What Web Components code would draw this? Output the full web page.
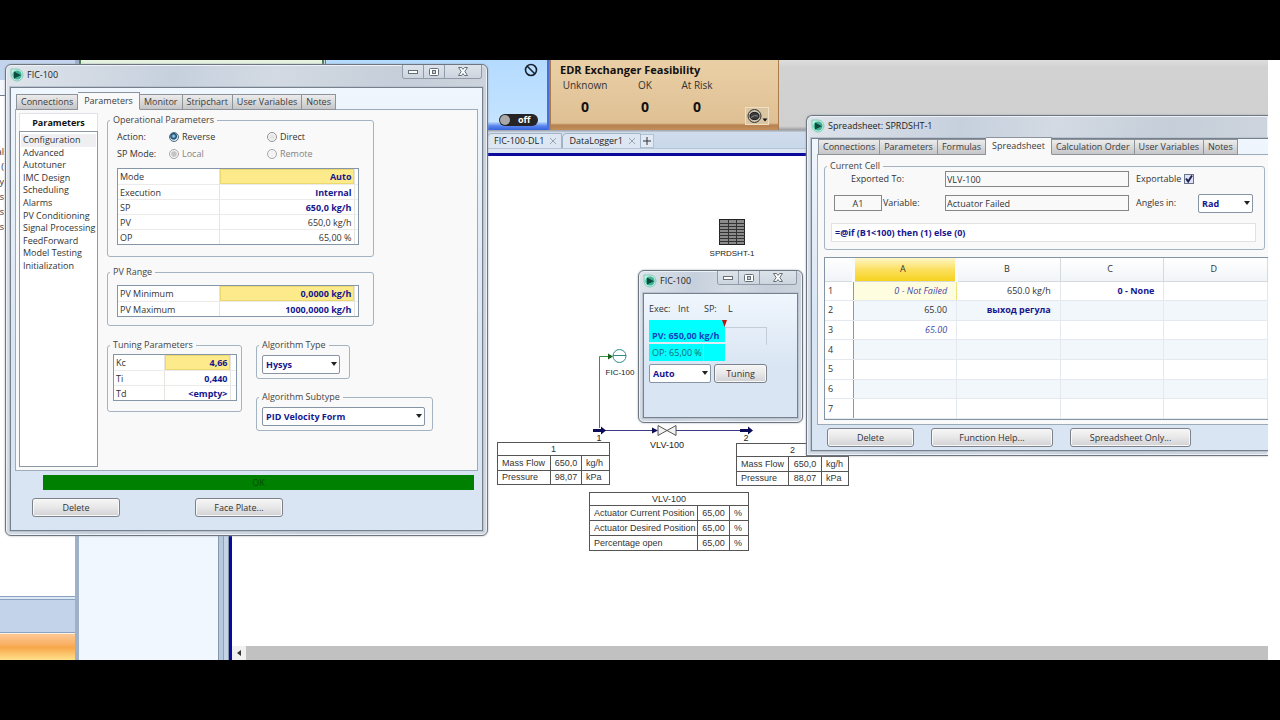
<!DOCTYPE html>
<html lang="en">
<head>
<meta charset="utf-8">
<title>Flowsheet workspace</title>
<style>
html, body { height: 100%; margin: 0; }
body { background: #000; font: 9px/12px "Open Sans", "Noto Sans", sans-serif; color: #333; }
</style>
</head>
<body>
<flow-workspace></flow-workspace>

<script>
const BASE = `*, *::before, *::after { box-sizing: border-box; } :host([hidden]) { display: none; }
button, input, select { font: inherit; color: inherit; margin: 0; }`;

function define(name, css, html, setup) {
  const tpl = document.createElement('template');
  customElements.define(name, class extends HTMLElement {
    constructor() {
      super();
      this.attachShadow({ mode: 'open' });
    }
    connectedCallback() {
      if (this.shadowRoot.childNodes.length) return;
      const markup = typeof html === 'function' ? html(this) : html;
      tpl.innerHTML = `<style>${BASE}${css}</style>${markup}`;
      this.shadowRoot.append(tpl.content.cloneNode(true));
      if (setup) setup(this);
    }
  });
}

/* ---------- small controls ---------- */

define('push-button', `
:host { display: block; height: 19px; }
button { display: block; width: 100%; height: 100%; padding: 0; line-height: 17px; color: #333;
  border: 1px solid #7d828a; border-radius: 3px;
  background: linear-gradient(#f6f6f6, #e9e9ea 45%, #d2d2d5); box-shadow: inset 0 0 0 1px #f8f8f8; }
`, `<button type="button"><slot></slot></button>`);

define('drop-down', `
:host { display: block; position: relative; height: 19px; }
select { appearance: none; display: block; width: 100%; height: 100%; padding: 1px 14px 0 3px;
  border: 1px solid #8694a3; border-radius: 2px; background: #fff; color: #16168e; font-weight: 700; line-height: 16px; }
svg { position: absolute; right: 3px; top: 7px; pointer-events: none; }
`, el => `<select aria-label="${el.getAttribute('label')}"><option>${el.getAttribute('value')}</option></select>
<svg width="6" height="4" viewBox="0 0 6 4"><path d="M0 0h6L3 4z" fill="#222"/></svg>`);

define('radio-option', `
:host { display: block; }
label { display: flex; align-items: center; gap: 3px; }
input { appearance: none; width: 10px; height: 10px; border: 1px solid #8e9296; border-radius: 50%;
  background: radial-gradient(circle, #e4e4e4 30%, #fff 80%); }
input:checked { border-color: #4e6a80; background: radial-gradient(circle at 45% 40%, #8cc9ea 0 10%, #1c4d70 40% 45%, #dceaf2 60%); }
:host([muted]) { color: #838383; }
:host([muted]) input { border-color: #a9a9a9; background: #f4f4f4; }
:host([muted]) input:checked { background: radial-gradient(circle, #c4c4c4 40%, #f4f4f4 60%); }
`, el => `<label><input type="radio" name="r" ${el.hasAttribute('checked') ? 'checked' : ''} ${el.hasAttribute('muted') ? 'disabled' : ''}><slot></slot></label>`);

define('group-box', `
:host { display: block; }
fieldset { margin: 0; min-width: 0; height: 100%; padding: 0; border: 1px solid #a4b3c1; border-radius: 3px; }
legend { margin-left: 2px; padding: 0 3px; height: 12px; line-height: 12px; color: #444; }
`, el => `<fieldset><legend>${el.getAttribute('label')}</legend><slot></slot></fieldset>`);

define('tab-strip', `
:host { display: block; }
div { display: flex; align-items: flex-end; height: 18px; padding-left: 1px; }
button { height: 16px; padding: 0 4px; border: 1px solid #8c939b; border-width: 1px 1px 1px 0; line-height: 14px; color: #3c3c3c;
  background: linear-gradient(#ececec, #d9d9da 50%, #c6c6c8); white-space: nowrap; }
button:first-child { border-left-width: 1px; }
button[aria-selected=true] { height: 18px; padding: 0 6px 1px; background: #f9f9f9; border-bottom-color: #f9f9f9; }
`, el => `<div role="tablist">${el.getAttribute('tabs').split('|').map(t =>
  `<button type="button" role="tab" aria-selected="${t === el.getAttribute('active')}">${t}</button>`).join('')}</div>`);

/* rows: "name;value;style" separated by "|" (style: b = bold value, y = current cell) */
define('prop-grid', `
:host { display: block; border: 1px solid #8496a8; background: #fff; }
table { width: 100%; border-collapse: collapse; table-layout: fixed; }
th, td { height: 15px; padding: 1px 2px 0; line-height: 13px; border-bottom: 1px solid #ecebe8; white-space: nowrap; }
tr:last-child > * { border-bottom: 0; }
th { width: var(--name, 101px); text-align: left; font-weight: 400; border-right: 1px solid #e6e4df; }
td { text-align: right; }
td + td { width: var(--pad, 4px); padding: 0; border-left: 1px solid #e6e4df; }
.b { font-weight: 700; color: #16168e; }
.y { background: #fdea8b; box-shadow: inset 0 0 0 1px #ecd870; }
`, el => `<table>${el.getAttribute('rows').split('|').map(r => {
  const [n, v, s = ''] = r.split(';');
  return `<tr><th scope="row">${n}</th><td class="${[...s].join(' ')}">${v.replace(/</g, '&lt;')}</td><td></td></tr>`;
}).join('')}</table>`);

/* ---------- window chrome ---------- */

define('win-frame', `
:host { display: block; position: absolute; border: 1px solid #6d7681; border-radius: 6px; padding: 0 4px 4px;
  background: linear-gradient(100deg, #dfe4eb, #c6d0dd 30%, #d3dae3 48%, #c5ced9 70%, #d2d8e0); box-shadow: inset 0 0 0 1px #eef1f5, 0 0 2px #9aa3ad; }
header { display: flex; height: 22px; }
h2 { flex: 1; display: flex; align-items: center; gap: 3px; margin: 0; padding-bottom: 2px; font: inherit; color: #222; }
.ctl { display: flex; height: 14px; margin-right: 1px; border: 1px solid #929ba7; border-top: 0; border-radius: 0 0 3px 3px; overflow: hidden; }
.ctl button { width: 21px; padding: 0; border: 0; border-right: 1px solid #929ba7; background: linear-gradient(#dde3ea, #ccd5df); display: grid; place-items: center; }
.ctl button:last-child { width: 36px; border-right: 0; }
main { border: 1px solid #76818d; box-shadow: 0 0 0 1px #b9c4d0; background: linear-gradient(#f0f6fd, #d9e5f3 60%); }
:host([bare]) .ctl { display: none; }
:host([bare]) { border-right: 0; border-radius: 6px 0 0 0; padding-right: 0; }
:host([bare]) main { border-right: 0; }
`, el => `<header><h2>
<svg width="14" height="14" viewBox="0 0 14 14"><path d="M1 1h6a6 6 0 1 1-6 6z" fill="#c9eee3" stroke="#7fcdb8"/><circle cx="7" cy="7" r="4.600" fill="#3fb296"/><path d="M4 3.600 11 7.300 4 10.600z" fill="#0d4a3f"/></svg>
<span>${el.getAttribute('title-text')}</span></h2>
<div class="ctl">
<button type="button" aria-label="Minimize"><svg width="10" height="4"><rect x=".5" y=".5" width="9" height="3" fill="#fff" stroke="#666e78"/></svg></button>
<button type="button" aria-label="Restore"><svg width="10" height="8"><rect x=".5" y=".5" width="9" height="7" rx="1" fill="#fff" stroke="#666e78"/><rect x="3.5" y="2.5" width="3" height="3" fill="#ccd" stroke="#666e78"/></svg></button>
<button type="button" aria-label="Close"><svg width="10" height="9" viewBox="0 0 10 9"><path d="M.5.5h3L5 2.400 6.500.5h3L6.800 4.500l2.700 4h-3L5 6.600 3.500 8.500h-3l2.700-4z" fill="#fff" stroke="#666e78"/></svg></button>
</div></header><main><slot></slot></main>`);

/* ---------- controller window ---------- */

define('controller-panel', `
:host { display: block; padding: 4px 4px 13px 4px; }
.page { display: flex; gap: 9px; height: 362px; margin-top: -1px; padding: 3px; border: 1px solid #9babba; background: #f9f9f9; }
nav { flex: none; width: 79px; display: flex; flex-direction: column; background: #fff; border: 1px solid #dfe3e8; }
h3 { margin: 0; height: 17px; font: inherit; font-weight: 700; line-height: 17px; text-align: center; color: #111; }
.list { flex: 1; border: 1px solid #8b98a5; margin: 0 -1px -1px; }
ul { display: grid; grid-auto-rows: 1fr; height: 138px; margin: 2px 1px 0; padding: 0; list-style: none; }
li { display: flex; align-items: center; padding-left: 2px; white-space: nowrap; }
li:first-child { background: #efeff1; }
.main { flex: 1; padding-top: 1px; }
.op { width: 267px; height: 143px; }
.modes { display: grid; grid-template-columns: 52px 98px 1fr; grid-auto-rows: 17px; align-items: center; padding: 2px 0 6px 9px; }
.op prop-grid, .pv prop-grid { margin-left: 9px; width: 242px; }
.pv { width: 267px; height: 60px; margin-top: 9px; padding-bottom: 0; }
.pv prop-grid { margin-top: 7px; }
.bottom { display: flex; gap: 14px; margin-top: 13px; align-items: flex-start; }
.tune { width: 135px; height: 73px; }
.tune prop-grid { width: 124px; margin: 3px 0 0 5px; --name: 50px; --pad: 6px; }
.algo { display: grid; gap: 12px; justify-items: start; }
.algo group-box { height: 40px; }
.type { width: 94px; } .type drop-down { width: 78px; }
.sub { width: 177px; } .sub drop-down { width: 163px; }
.algo drop-down { margin: 4px 0 0 5px; }
.status { height: 15px; margin: 4px 4px 0 28px; background: #008000; color: #064b06; text-align: center; line-height: 15px; }
.acts { display: flex; gap: 75px; margin: 8px 0 0 17px; }
.acts push-button { width: 88px; }
`, `
<tab-strip tabs="Connections|Parameters|Monitor|Stripchart|User Variables|Notes" active="Parameters"></tab-strip>
<div class="page">
  <nav><h3>Parameters</h3><div class="list"><ul>
    <li>Configuration</li><li>Advanced</li><li>Autotuner</li><li>IMC Design</li><li>Scheduling</li><li>Alarms</li>
    <li>PV Conditioning</li><li>Signal Processing</li><li>FeedForward</li><li>Model Testing</li><li>Initialization</li></ul></div></nav>
  <div class="main">
    <group-box class="op" label="Operational Parameters">
      <div class="modes">
        <span>Action:</span><radio-option checked>Reverse</radio-option><radio-option>Direct</radio-option>
        <span>SP Mode:</span><radio-option checked muted>Local</radio-option><radio-option muted>Remote</radio-option>
      </div>
      <prop-grid rows="Mode;Auto;by|Execution;Internal;b|SP;650,0 kg/h;b|PV;650,0 kg/h|OP;65,00 %"></prop-grid>
    </group-box>
    <group-box class="pv" label="PV Range">
      <prop-grid rows="PV Minimum;0,0000 kg/h;by|PV Maximum;1000,0000 kg/h;b"></prop-grid>
    </group-box>
    <div class="bottom">
      <group-box class="tune" label="Tuning Parameters"><prop-grid rows="Kc;4,66;by|Ti;0,440;b|Td;<empty>;b"></prop-grid></group-box>
      <div class="algo">
        <group-box class="type" label="Algorithm Type"><drop-down label="Algorithm Type" value="Hysys"></drop-down></group-box>
        <group-box class="sub" label="Algorithm Subtype"><drop-down label="Algorithm Subtype" value="PID Velocity Form"></drop-down></group-box>
      </div>
    </div>
  </div>
</div>
<div class="status" role="status">OK</div>
<div class="acts"><push-button>Delete</push-button><push-button>Face Plate...</push-button></div>
`);

/* ---------- face plate window ---------- */

define('face-plate', `
:host { display: block; padding: 9px 4px 34px 5px; }
.state { display: grid; grid-template-columns: 29px 26px 24px 1fr; }
.gauge { position: relative; width: 118px; margin-top: 5px; }
.pv { width: 76px; height: 22px; padding: 9px 0 0 3px; background: #0ff; font-weight: 700; color: #1440c0; white-space: nowrap; line-height: 14px; }
.rest { position: absolute; left: 76px; right: 0; top: 7px; height: 18px; border: 1px solid #c4ccd8; border-width: 1px 1px 0 0; }
.gauge svg { position: absolute; left: 73px; top: 0; }
.op { display: flex; width: 76px; height: 17px; margin-top: 2px; background: #0ff; color: #1d6570; line-height: 18px; }
.op span { width: 55px; padding-left: 3px; border-right: 1px solid #8fe3ea; white-space: nowrap; }
.row { display: flex; gap: 3px; margin-top: 3px; }
drop-down { width: 62px; } push-button { width: 53px; }
`, `
<div class="state"><span>Exec:</span><span>Int</span><span>SP:</span><span>L</span></div>
<div class="gauge"><div class="pv">PV: 650,00 kg/h</div><div class="rest"></div>
<svg width="5" height="7" viewBox="0 0 5 7"><path d="M0 0h5L2.500 7z" fill="#c01414"/></svg></div>
<div class="op"><span>OP: 65,00 %</span></div>
<div class="row"><drop-down label="Mode" value="Auto"></drop-down><push-button>Tuning</push-button></div>
`);

/* ---------- spreadsheet window ---------- */

define('sheet-grid', `
:host { display: block; border: 1px solid #8394a4; border-right: 0; background: #fff; overflow: hidden; }
table { width: 100%; height: 161px; border-collapse: collapse; table-layout: fixed; }
th, td { padding: 0; font-weight: 400; line-height: 14px; border: 1px solid #e3e9ee; border-width: 0 1px 1px 0; }
tr > :first-child { width: 28px; text-align: left; padding-left: 3px; border-right-color: #8f979f; }
thead th { height: 23px; padding-right: 4px; background: linear-gradient(#fff, #f1f4f7); border-color: #d6dade; }
thead .sel { background: linear-gradient(#fff6c6, #fbe060 50%, #f6d21e); border-left: 3px solid #f8fafc; border-right: 3px solid #f8fafc; }
tbody tr:nth-child(even) td { background: #f2f7fc; }
td { text-align: right; padding-right: 9px; white-space: nowrap; }
tbody tr .cur { background: #fffde0; border-right-color: #eee27a; }
.i { font-style: italic; color: #4444a8; }
.b { font-weight: 700; color: #16168e; }
`, () => {
  const rows = [
    [['0 - Not Failed', 'i cur'], ['650.0 kg/h', ''], ['0 - None', 'b'], ['', '']],
    [['65.00', ''], ['выход регула', 'b'], ['', ''], ['', '']],
    [['65.00', 'i'], ['', ''], ['', ''], ['', '']]
  ];
  while (rows.length < 7) rows.push([['', ''], ['', ''], ['', ''], ['', '']]);
  return `<table><thead><tr><th></th><th scope="col" class="sel">A</th><th scope="col">B</th><th scope="col">C</th><th scope="col">D</th></tr></thead><tbody>${
    rows.map((r, n) => `<tr><th scope="row">${n + 1}</th>${r.map(([t, c]) => `<td class="${c}">${t}</td>`).join('')}</tr>`).join('')}</tbody></table>`;
});

define('spreadsheet-panel', `
:host { display: block; padding: 0 0 3px 5px; }
tab-strip { margin-top: -2px; }
.page { margin-top: -1px; padding: 5px 0 4px 6px; border: 1px solid #9babba; border-right: 0; background: #f9f9f9; }
group-box { margin-right: 3px; height: 90px; }
.form { display: grid; grid-template-columns: 48px 63px minmax(120px, 184px) 69px 55px; grid-template-rows: 16px 16px; row-gap: 8px; align-items: center; margin-top: -1px; padding-left: 9px; }
.exp { grid-column: 1 / 3; padding-left: 17px; }
input[type=text] { width: 100%; height: 16px; padding: 0 1px; border: 1px solid #868686; background: #f9f9f9; border-radius: 0; }
input.addr { text-align: center; }
.side { padding-left: 7px; }
.var { padding-left: 1px; }
.check { grid-column: 4 / 6; display: flex; align-items: center; gap: 3px; padding-left: 7px; }
.check input { appearance: none; width: 10px; height: 10px; border: 1px solid #6a7688; background: #dfe3f3; }
.check svg { margin-left: -13px; pointer-events: none; }
.formula { padding: 12px 8px 0 6px; }
.formula input[type=text] { height: 19px; border-color: #e0e3e6; background: #fff; padding-left: 3px; color: #16168e; font-weight: 700; }
sheet-grid { margin-top: 7px; }
.acts { display: flex; gap: 17px; padding: 3px 0 0 10px; }
.d { width: 87px; } .f { width: 122px; } .s { width: 121px; }
`, `
<tab-strip tabs="Connections|Parameters|Formulas|Spreadsheet|Calculation Order|User Variables|Notes" active="Spreadsheet"></tab-strip>
<div class="page">
  <group-box label="Current Cell">
    <div class="form">
      <label class="exp" for="ex">Exported To:</label><input id="ex" type="text" value="VLV-100" readonly>
      <label class="check">Exportable<input type="checkbox" checked><svg width="10" height="10" viewBox="0 0 10 10"><path d="M2 4.500 4.200 7.500 8 1.500" fill="none" stroke="#23235c" stroke-width="2"/></svg></label>
      <input class="addr" type="text" aria-label="Cell" value="A1" readonly><label class="var" for="va">Variable:</label><input id="va" type="text" value="Actuator Failed" readonly>
      <span class="side">Angles in:</span><drop-down label="Angles in" value="Rad"></drop-down>
    </div>
    <div class="formula"><input type="text" aria-label="Formula" value="=@if (B1&lt;100) then (1) else (0)"></div>
  </group-box>
  <sheet-grid></sheet-grid>
</div>
<div class="acts"><push-button class="d">Delete</push-button><push-button class="f">Function Help...</push-button><push-button class="s">Spreadsheet Only...</push-button></div>
`);

/* ---------- flowsheet canvas ---------- */

define('stream-table', `
:host { display: block; position: absolute; left: var(--x); top: var(--y); width: var(--w); font: 9px/12px "Liberation Sans", Arial, sans-serif; }
table { width: 100%; height: var(--h, 43px); border-collapse: collapse; table-layout: fixed; background: #fff; }
th, td { padding: 0; border: 1px solid #555; line-height: 12px; font-weight: 400; text-align: center; white-space: nowrap; }
tbody th { text-align: left; padding-left: 4px; }
td:last-child { text-align: left; padding-left: 4px; }
`, el => {
  const [a, b, c] = el.getAttribute('cols').split(' ');
  return `<table><colgroup><col style="width:${a}px"><col style="width:${b}px"><col style="width:${c}px"></colgroup>
<thead><tr><th colspan="3">${el.getAttribute('caption')}</th></tr></thead><tbody>${el.getAttribute('rows').split('|').map(r => {
    const [n, v, u] = r.split(';');
    return `<tr><th scope="row">${n}</th><td>${v}</td><td>${u}</td></tr>`;
  }).join('')}</tbody></table>`;
});

define('flow-canvas', `
:host { display: block; position: relative; overflow: hidden; background: #fff; font: 9px/12px "Liberation Sans", Arial, sans-serif; }
.art { position: absolute; left: 0; top: 0; }
.tag { position: absolute; left: var(--x); top: var(--y); transform: translateX(-50%); white-space: nowrap; color: #222; }
.small { font-size: 8px; }
`, `
<svg class="art" width="640" height="320" viewBox="232 156 640 320">
  <path d="M599.500 428V356.500H610" fill="none" stroke="#3c8f3c"/>
  <path d="M608 353.500 613 356.500 608 359.500z" fill="#1d5f1d"/>
  <circle cx="619.500" cy="356" r="6.500" fill="#fff" stroke="#2e8c8c"/><path d="M613 355.500h13" stroke="#2e8c8c"/>
  <path d="M605 430.500H652M676 430.500H740" stroke="#3a3a86"/>
  <g fill="#0c0c58"><path d="M593 429h8v-2.500l5 4-5 4V432h-8zM740 429h8v-2.500l5 4-5 4V432h-8zM652 427.500l6 3-6 3z"/></g>
  <path d="M658 425.500v10L667 430.500l9-5v10l-9-5z" fill="#f2f2f2" stroke="#555"/>
  <rect x="719.500" y="219.500" width="25" height="25" fill="#8b8b8b" stroke="#222"/>
  <path d="M728.500 220v25M736.500 220v25M719 223.500h26M719 226.500h26M719 229.500h26M719 232.500h26M719 235.500h26M719 238.500h26M719 241.500h26" stroke="#333"/>
</svg>
<span class="tag small" style="--x:500px;--y:92px">SPRDSHT-1</span>
<span class="tag small" style="--x:388px;--y:211px">FIC-100</span>
<span class="tag" style="--x:367px;--y:276px">1</span>
<span class="tag" style="--x:514px;--y:276px">2</span>
<span class="tag" style="--x:435px;--y:283px">VLV-100</span>
<stream-table style="--x:265px;--y:286px;--w:111px" caption="1" cols="53 31 28" rows="Mass Flow;650,0;kg/h|Pressure;98,07;kPa"></stream-table>
<stream-table style="--x:504px;--y:287px;--w:111px" caption="2" cols="52 33 27" rows="Mass Flow;650,0;kg/h|Pressure;88,07;kPa"></stream-table>
<stream-table style="--x:357px;--y:336px;--w:159px;--h:59px" caption="VLV-100" cols="108 32 19" rows="Actuator Current Position;65,00;%|Actuator Desired Position;65,00;%|Percentage open;65,00;%"></stream-table>
`);

define('sheet-tabs', `
:host { display: flex; align-items: flex-end; height: 21px; padding: 0 0 5px 258px; background: linear-gradient(#cfdcec, #c9d8ea 75%, #aebfd2 78%, #dbe6f2 82%); }
.t { display: flex; align-items: center; gap: 6px; height: 15px; padding: 0 5px 0 6px; border: 1px solid #a3b4c6; border-bottom: 0; border-radius: 5px 2px 0 0; background: #dce7f3; color: #222; white-space: nowrap; }
.t b { font-weight: 400; }
button { padding: 0; border: 0; background: none; display: grid; place-items: center; height: 14px; }
.add { width: 13px; border: 1px solid #b4c3d3; border-left: 0; background: #e2ebf5; }
`, `
<span class="t"><b>FIC-100-DL1</b><button type="button" aria-label="Close FIC-100-DL1"><svg width="6" height="6"><path d="M0 0l6 6M6 0L0 6" stroke="#9aa3ac"/></svg></button></span>
<span class="t"><b>DataLogger1</b><button type="button" aria-label="Close DataLogger1"><svg width="6" height="6"><path d="M0 0l6 6M6 0L0 6" stroke="#9aa3ac"/></svg></button></span>
<button class="add" type="button" aria-label="New tab"><svg width="8" height="8"><path d="M4 0v8M0 4h8" stroke="#333"/></svg></button>`);

/* ---------- ribbon and side panes ---------- */

define('status-ribbon', `
:host { display: flex; height: 72px; background: linear-gradient(#dedede, #d2d2d2 10%, #d0d0d0 92%, #9c9ea2 97%, #c2ccd8); }
.g { width: 245px; height: 70px; background: #e6f3e0; border: 2px solid #4c7d50; border-width: 0 2px; }
.b { display: flex; flex-direction: column; align-items: flex-end; justify-content: space-between; width: 224px; height: 70px; margin-left: 1px; padding: 3px 9px 4px 0; background: linear-gradient(#b4dbff, #c4e3ff 88%, #5b86ee 94%, #3563dc); border: 1px solid #4870dc; border-width: 0 2px 0 1px; }
.e { width: 230px; height: 70px; border: 1px solid #a97c4e; border-width: 0 1px 0 2px; background: linear-gradient(#eacfa6, #dfc094 90%, #b78250 93%, #c08e5c); padding: 3px 9px; position: relative; }
h3 { margin: 0; font-size: 11px; line-height: 13px; color: #111; white-space: nowrap; }
dl { display: grid; grid-template-columns: 50px 70px 34px; justify-items: center; margin: 1px 0 0; white-space: nowrap; }
dl div { text-align: center; }
dt { font-size: 10px; line-height: 16px; }
dd { margin: 4px 0 0; font: 700 14px/20px "Open Sans", "Noto Sans", sans-serif; color: #111; }
.off { display: flex; align-items: center; gap: 8px; width: 39px; height: 12px; padding: 0 2px 0 1px; border: 0; border-radius: 6px; background: #262424; color: #fff; font-weight: 700; }
.off i { width: 10px; height: 10px; border-radius: 50%; background: #a9a9a9; }
.view { position: absolute; right: 9px; bottom: 5px; width: 24px; height: 18px; padding: 0; border: 1px solid #f0dfc2; background: #dbc6a4; }
.view svg { display: block; }
`, `
<div class="g"></div>
<div class="b"><svg width="14" height="14" viewBox="0 0 14 14"><g fill="none" stroke="#18222e" stroke-width="1.600"><circle cx="7" cy="7" r="5.500"/><path d="M3 3l8 8"/></g></svg>
<button type="button" class="off"><i></i>off</button></div>
<section class="e"><h3>EDR Exchanger Feasibility</h3>
<dl><div><dt>Unknown</dt><dd>0</dd></div><div><dt>OK</dt><dd>0</dd></div><div><dt>At Risk</dt><dd>0</dd></div></dl>
<button type="button" class="view" aria-label="View results"><svg width="22" height="16" viewBox="0 0 22 16"><circle cx="8.500" cy="8" r="6.500" fill="#c9c0ae" stroke="#333"/><ellipse cx="8.500" cy="8" rx="4.500" ry="3.500" fill="#3c3c3c" stroke="#111"/><path d="M5 9.500q3-3 7-1.500" fill="none" stroke="#8a8a8a"/><path d="M16.500 10.500h5l-2.500 3z" fill="#111"/></svg></button>
</section>`);

define('nav-pane', `
:host { display: flex; flex-direction: column; width: 79px; border-right: 4px solid #9fb1c6; background: #fff; }
.top { height: 20px; background: #c3d5ee; }
.sub { height: 16px; background: #f4f8fd; border-bottom: 1px solid #6f7d8c; }
ul { flex: 1; margin: 0; padding: 48px 0 0; list-style: none; }
li { display: flex; justify-content: flex-end; align-items: center; width: 4px; height: 15px; overflow: hidden; }
.gap { height: 4px; border: 1px solid #8ba2be; border-width: 1px 0; background: #dce8f6; }
.blue { height: 33px; background: #c2d3ea; border-bottom: 1px solid #8ba2be; }
.hot { height: 27px; border-top: 1px solid #fff2e0; background: linear-gradient(#fcc795, #f9ad5c 45%, #f8a548 50%, #ffe08c); }
`, `<div class="top"></div><div class="sub"></div><ul><li>al</li><li>(</li><li>ly</li><li>s</li><li>s</li><li>es</li></ul>
<div class="gap"></div><div class="blue"></div><div class="hot"></div>`);

define('flow-workspace', `
:host { display: flex; flex-direction: column; box-sizing: border-box; height: 100vh; padding: 60px 0; background: #000; }
.screen { flex: 1; min-height: 0; display: flex; position: relative; overflow: hidden; padding-right: 12px; background: #fff; }
.work { flex: 1; min-width: 0; display: flex; flex-direction: column; }
.body { flex: 1; min-height: 0; display: flex; }
.tree { width: 139px; background: #f0f7ff; }
.split { width: 11px; border: 1px solid #8598ae; border-width: 0 1px; background: linear-gradient(90deg, #b6c8dc 40%, #8fa3b8 40% 50%, #c4d4e6 50%); }
.view { flex: 1; min-width: 0; display: flex; flex-direction: column; }
.frame { flex: 1; min-height: 0; display: flex; flex-direction: column; border: 3px solid #0a0a9c; border-width: 3px 0 0 3px; }
flow-canvas { flex: 1; }
.scroll { display: flex; height: 14px; background: #c1c1c1; }
.scroll button { width: 14px; padding: 0; border: 0; background: #f0f0f0; display: grid; place-items: center; }
.desk { position: absolute; inset: 0 12px 0 0; overflow: hidden; pointer-events: none; }
win-frame { pointer-events: auto; }
.ctrl { left: 5px; top: 4px; width: 483px; }
.face { left: 638px; top: 210px; width: 165px; }
.sprd { left: 806px; top: 55px; right: 0; }
`, `
<div class="screen">
  <nav-pane></nav-pane>
  <div class="work">
    <status-ribbon></status-ribbon>
    <div class="body">
      <div class="tree"></div><div class="split"></div>
      <div class="view"><sheet-tabs></sheet-tabs>
        <div class="frame"><flow-canvas></flow-canvas>
          <div class="scroll"><button type="button" aria-label="Scroll left"><svg width="4" height="6"><path d="M4 0v6L0 3z" fill="#333"/></svg></button></div></div></div>
    </div>
  </div>
  <div class="desk">
    <win-frame class="ctrl" title-text="FIC-100"><controller-panel></controller-panel></win-frame>
    <win-frame class="face" title-text="FIC-100"><face-plate></face-plate></win-frame>
    <win-frame class="sprd" bare title-text="Spreadsheet: SPRDSHT-1"><spreadsheet-panel></spreadsheet-panel></win-frame>
  </div>
</div>`);
</script>
</body>
</html>
